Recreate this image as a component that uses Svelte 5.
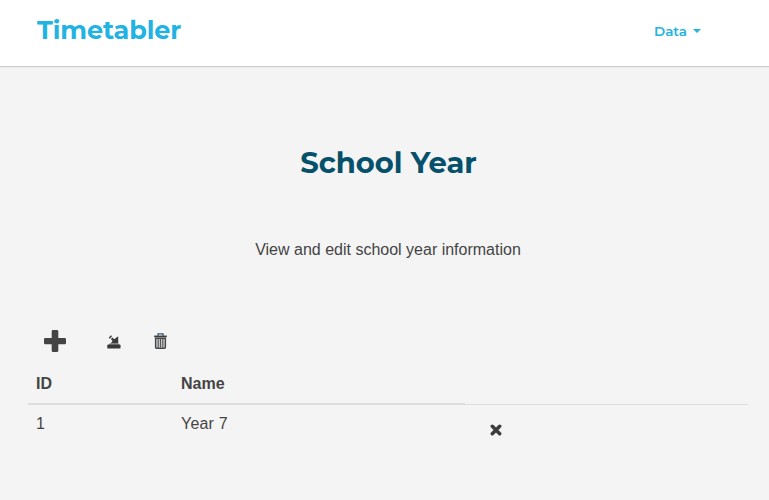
<script>
  const rows = [{ id: 1, name: 'Year 7' }];
</script>

<div class="page">
  <header>
    <a class="brand" href="#home">Timetabler</a>
    <a class="menu" href="#data">Data <span class="caret"></span></a>
  </header>
  <main>
    <h1>School Year</h1>
    <p>View and edit school year information</p>
    <div class="tools">
      <button aria-label="Add" class="add">
        <svg width="22" height="22" viewBox="0 0 22 22"><path fill="#444" d="M9 0h4q1.3 0 1.3 1.3V8h6.4Q22 8 22 9.3v3.6q0 1.3-1.3 1.3h-6.4v6.5Q14.300 22 13 22H9q-1.300 0-1.300-1.300v-6.500H1.300Q0 14.200 0 12.900V9.300Q0 8 1.300 8h6.400V1.300Q7.700 0 9 0z" /></svg>
      </button>
      <button aria-label="Import" class="import">
        <svg width="14" height="14" viewBox="0 0 14 14">
          <path fill="#3a3a3a" d="M3.500 8.500 5.600 5.900 3.900 4.100 5.400 2.600 7.200 4.300 11.200 1.300V8.500z" />
          <path fill="#3a3a3a" d="M1.700 2.700 4 .300l1.100 1-2.300 2.400z" />
          <path fill="#777" d="M2.500 8.500h9l1.500 1.500H1z" />
          <rect x=".3" y="9.800" width="13.200" height="3.700" rx=".5" fill="#383838" />
        </svg>
      </button>
      <button aria-label="Delete" class="trash">
        <svg width="13" height="16" viewBox="0 0 13 16" fill="none">
          <path stroke="#35566a" stroke-width="1.300" d="M4 2.700V.9h5v1.800" />
          <path stroke="#3c3c3c" stroke-width="1.700" d="M.2 3.400h12.600" />
          <path fill="#c9cdd0" stroke="#444" stroke-width="1.400" d="M1.600 5.300h9.800v8.900q0 1-1 1H2.600q-1 0-1-1z" />
          <path stroke="#555" stroke-width="1.100" d="M4.200 5.500v9M6.500 5.500v9M8.800 5.500v9" />
        </svg>
      </button>
    </div>
    <table>
      <thead><tr><th class="id">ID</th><th class="name">Name</th></tr></thead>
      <tbody>
        {#each rows as row}
          <tr>
            <td>{row.id}</td>
            <td class="value">{row.name}</td>
            <td class="action">
              <button aria-label="Remove">
                <svg width="12" height="12" viewBox="0 0 12 12"><path stroke="#3c3c3c" stroke-width="3.500" stroke-linecap="round" d="m2.300 2.300 7.400 7.400M9.700 2.300 2.300 9.700" /></svg>
              </button>
            </td>
          </tr>
        {/each}
      </tbody>
    </table>
  </main>
</div>

<style>
  :global(body) { background: #f4f4f4; overflow: hidden; }
  .page {
    box-sizing: border-box;
    height: 500px;
    color: #444;
    background: #f4f4f4;
    font: 16px/24px "Liberation Sans", Arial, sans-serif;
  }
  header {
    box-sizing: border-box;
    height: 66px;
    display: flex;
    justify-content: space-between;
    align-items: flex-start;
    padding: 15px 68px 0 37px;
    background: #fff;
    box-shadow: 0 1px 1px rgba(0, 0, 0, .16);
  }
  a {
    color: #22b3e3;
    text-decoration: none;
    font-family: Montserrat, Inter, sans-serif;
    white-space: nowrap;
  }
  .brand { font-size: 25.500px; line-height: 30px; font-weight: 700; letter-spacing: -.1px; }
  .menu { display: flex; align-items: center; font-size: 13.500px; line-height: 32px; font-weight: 600; letter-spacing: 0; }
  .caret {
    margin-left: 6px;
    border: 4px solid transparent;
    border-top-color: currentColor;
    border-bottom: 0;
  }
  main { padding: 0 21px 0 28px; }
  h1 {
    margin: 0;
    padding: 77px 0 0 1px;
    color: #05506a;
    text-align: center;
    font: 700 29px/40px Montserrat, Inter, sans-serif;
    letter-spacing: 0;
  }
  p { margin: 55px 0 0; text-align: center; }
  .tools { display: flex; height: 22px; margin: 68px 0 11px; padding-left: 16px; }
  button { display: block; padding: 0; border: 0; background: none; }
  svg { display: block; }
  .import { margin: 5px 0 0 41px; align-self: flex-start; }
  .trash { margin: 3px 0 0 33px; align-self: flex-start; }
  table { width: 720px; table-layout: fixed; border-collapse: separate; border-spacing: 0; }
  th, td { box-sizing: border-box; padding: 8px; text-align: left; vertical-align: top; }
  th { height: 42px; padding-top: 9px; padding-bottom: 7px; border-bottom: 2px solid #ddd; }
  .id { width: 145px; }
  .name { width: 292px; }
  td { padding-top: 7px; }
  .value { letter-spacing: .2px; }
  .action { box-shadow: inset 0 1px #ddd; position: relative; top: -1px; padding: 20px 25px 8px; }
</style>
